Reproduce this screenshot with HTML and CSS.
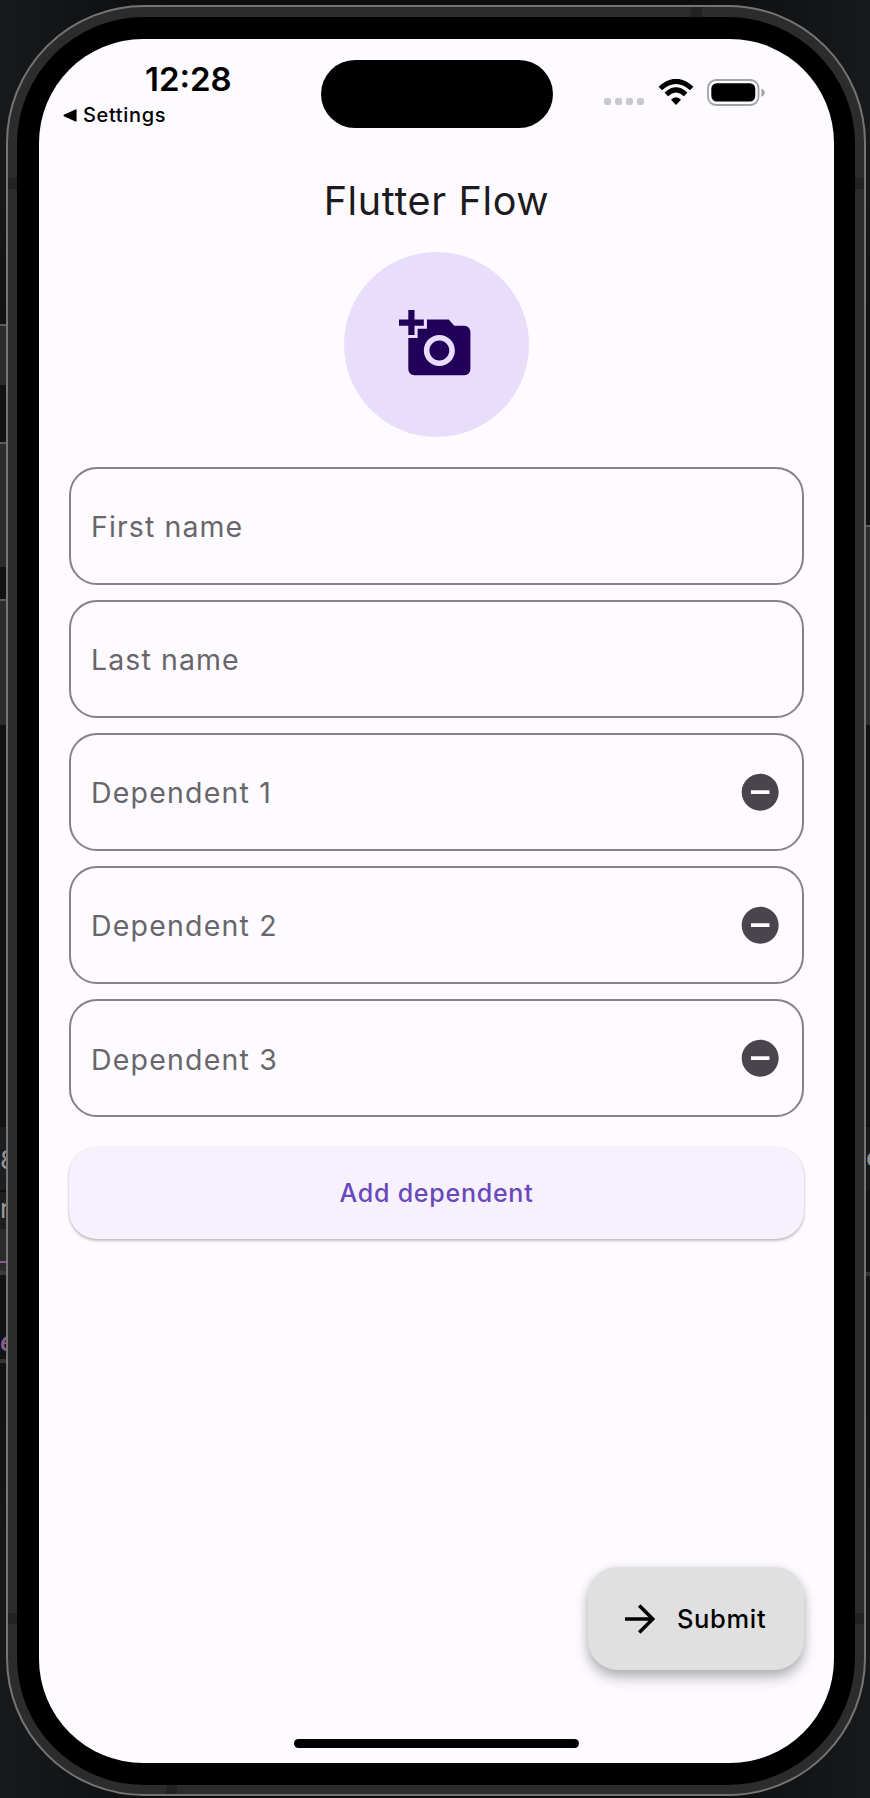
FILE: index.html
```html
<!DOCTYPE html>
<html lang="en">
<head>
<meta charset="utf-8">
<title>Flutter Flow</title>
<link rel="stylesheet" href="styles.css">
</head>
<body>
<div class="desktop">
  <div class="strip strip-left">
    <div class="panel p1"></div>
    <div class="panel p2"></div>
    <div class="panel p3"></div>
    <div class="row r1"><span>8</span></div>
    <div class="row r2"><span>r</span></div>
    <div class="tab"></div>
    <div class="row r3"><span>e</span></div>
  </div>
  <div class="device">
    <i class="band band-lt"></i><i class="band band-lb"></i>
    <i class="band band-rt"></i><i class="band band-rb"></i>
    <i class="band band-top"></i><i class="band band-bottom"></i>
    <div class="bezel">
      <main class="screen">
        <header class="status">
          <div class="status-left">
            <div class="time">12:28</div>
            <div class="back">
              <svg width="14" height="13" viewBox="0 0 13 12"><path d="M12.600 1v10q0 1-1 .6L.8 6.700Q0 6 .8 5.300L11.600.4q1-.4 1 .6z"/></svg>
              <span class="back-label">Settings</span>
            </div>
          </div>
          <div class="island"></div>
          <div class="status-right">
            <div class="dots"><i></i><i></i><i></i><i></i></div>
            <svg class="wifi" width="36" height="27" viewBox="0 0 36 27">
              <path d="M18 26l5-5.200Q21 18.300 18 18.300T13 20.800z"/>
              <path d="M8.300 15.300Q18 6.500 27.700 15.300M2.300 9.500Q18-4.800 33.700 9.500" fill="none" stroke="#000" stroke-width="5"/>
            </svg>
            <svg class="battery" width="59" height="28" viewBox="0 0 59 28">
              <rect x="1" y="1" width="50.500" height="25" rx="8" fill="none" stroke="#a3a3a5" stroke-width="1.800"/>
              <rect x="4.300" y="4.200" width="44" height="18.400" rx="5.500"/>
              <path d="M54.500 9.500q3.300 1.400 3.300 4.200t-3.300 4.200z" fill="#a3a3a5"/>
            </svg>
          </div>
        </header>
        <h1 class="title">Flutter Flow</h1>
        <div class="avatar">
          <svg width="74.500" height="74.500" viewBox="0 0 24 24"><path d="M3 4V1h2v3h3v2H5v3H3V6H0V4h3zm3 6V7h3V4h7l1.830 2H21c1.100 0 2 .9 2 2v12c0 1.100-.9 2-2 2H5c-1.100 0-2-.9-2-2V10h3zm7 9c2.760 0 5-2.240 5-5s-2.240-5-5-5-5 2.240-5 5 2.240 5 5 5zm-3.200-5c0 1.770 1.430 3.200 3.200 3.200s3.200-1.430 3.200-3.200-1.430-3.200-3.200-3.200-3.200 1.430-3.200 3.200z"/></svg>
        </div>
        <div class="fields">
          <div class="field name"><span>First name</span></div>
          <div class="field name"><span>Last name</span></div>
          <div class="field"><span>Dependent 1</span><svg class="remove" viewBox="0 0 24 24"><path d="M12 2C6.480 2 2 6.480 2 12s4.480 10 10 10 10-4.480 10-10S17.520 2 12 2zm5 11H7v-2h10v2z"/></svg></div>
          <div class="field"><span>Dependent 2</span><svg class="remove" viewBox="0 0 24 24"><path d="M12 2C6.480 2 2 6.480 2 12s4.480 10 10 10 10-4.480 10-10S17.520 2 12 2zm5 11H7v-2h10v2z"/></svg></div>
          <div class="field"><span>Dependent 3</span><svg class="remove" viewBox="0 0 24 24"><path d="M12 2C6.480 2 2 6.480 2 12s4.480 10 10 10 10-4.480 10-10S17.520 2 12 2zm5 11H7v-2h10v2z"/></svg></div>
        </div>
        <div class="add"><span>Add dependent</span></div>
        <div class="submit">
          <svg width="30" height="30" viewBox="0 0 30 30"><path d="M0 15H27.500M14.200 1.400L27.800 15 14.200 28.600" fill="none" stroke="#000" stroke-width="3.600"/></svg>
          <span>Submit</span>
        </div>
        <div class="home"></div>
      </main>
    </div>
  </div>
  <div class="strip strip-right">
    <div class="panel q1"></div>
    <div class="row q2"><span>e</span></div>
    <div class="line"></div>
  </div>
</div>
</body>
</html>
```
FILE: styles.css
```css
* { box-sizing: border-box; }
body { margin: 0; background: #111214; font-family: Inter, "Liberation Sans", sans-serif; }
.desktop {
  display: grid;
  grid-template-columns: 6px 860px 4px;
  width: 870px;
  height: 1798px;
  overflow: hidden;
  background: linear-gradient(90deg, #18191b 0, #0c0d0e 170px, #0c0d0e 700px, #18191b 870px);
}
.strip {
  display: flex;
  flex-direction: column;
  overflow: hidden;
  background: linear-gradient(rgba(16, 17, 19, 0) 180px, #111214 320px, #111214 1400px, rgba(16, 17, 19, 0) 1600px);
}
.panel { flex: none; background: #2c2c2c; border-top: 2px solid #5a5a5a; }
.p1 { margin-top: 324px; height: 61px; }
.p2 { margin-top: 57px; height: 125px; }
.p3 { margin-top: 32px; height: 126px; }
.row { flex: none; overflow: hidden; font-size: 26px; line-height: 30px; color: #999; }
.r1 { margin-top: 400px; height: 65px; padding-top: 18px; background: #1c1e1f; border-top: 2px solid #0e0f10; }
.r2 { height: 39px; background: #1c1e1f; border-top: 2px solid #0e0f10; line-height: 34px; }
.r3 { margin-top: 52px; height: 36px; color: #8d5a8d; font-style: italic; font-weight: 600; border-bottom: 4px solid #333; }
.tab {
  flex: none;
  height: 46px;
  background: linear-gradient(#292c2a 32px, #8d5a8d 32px, #8d5a8d 34px, #292c2a 34px, #292c2a 42px, #3a3c3b 42px);
}
.q1 { margin-top: 525px; height: 200px; }
.q2 { margin-top: 400px; height: 65px; padding-top: 16px; background: #18191a; border-top: 2px solid #0e0f10; }
.line { flex: none; margin-top: 82px; height: 4px; background: #333; }

.device {
  position: relative;
  width: 860px;
  height: 1791px;
  margin-top: 5px;
  padding: 10px 9px 9px;
  border: 2px solid #757575;
  border-radius: 138px;
  background: #2c2c2c;
}
.band { position: absolute; background: #222; }
.band-lt, .band-rt { top: 171px; width: 9px; height: 11px; }
.band-lb, .band-rb { top: 1606px; width: 9px; height: 11px; }
.band-lt, .band-lb { left: 0; }
.band-rt, .band-rb { right: 0; }
.band-top { top: 0; left: 683px; width: 11px; height: 10px; }
.band-bottom { bottom: 0; left: 158px; width: 11px; height: 9px; }
.bezel { height: 1768px; padding: 22px 21px 22px 22px; border-radius: 127px; background: #000; }
.screen {
  display: flex;
  flex-direction: column;
  height: 1724px;
  padding: 21px 30px 0;
  border-radius: 104px;
  background: #fdfbff;
}

.status { display: flex; height: 68px; }
.status-left { flex: none; width: 251.500px; margin: 0 30px 0 -30px; padding-left: 23.500px; }
.time { height: 45px; padding-left: 82.500px; font-size: 33px; line-height: 38px; font-weight: 600; letter-spacing: 0; }
.back { display: flex; align-items: center; gap: 6.500px; height: 20px; }
.back svg { flex: none; }
.back-label { font-size: 20px; line-height: 20px; font-weight: 480; letter-spacing: 0.650px; white-space: nowrap; }
.island { flex: none; width: 232px; height: 68px; border-radius: 34px; background: #000; }
.status-right { display: flex; height: 28px; margin: 19px 0 0 51px; }
.dots { display: flex; gap: 4.200px; width: 54px; padding-top: 19px; }
.dots i { flex: none; width: 7px; height: 7px; border-radius: 2.200px; background: #c9c8cb; }
.wifi { flex: none; }
.battery { flex: none; margin-left: 13.500px; }

.title {
  margin: 43px 0 0;
  height: 60px;
  text-align: center;
  font-size: 39.500px;
  line-height: 60px;
  font-weight: 380;
  letter-spacing: 0.650px;
  color: #1d1b1f;
}
.avatar {
  display: flex;
  align-items: center;
  justify-content: center;
  width: 185px;
  height: 185px;
  margin: 20.500px auto 0;
  border-radius: 50%;
  background: #e8defc;
}
.avatar svg { fill: #22005a; }
.fields { display: flex; flex-direction: column; gap: 15px; margin-top: 30.100px; }
.field {
  display: flex;
  align-items: center;
  justify-content: space-between;
  height: 118.100px;
  padding: 2px 20px 0 20px;
  border: 2px solid #85818a;
  border-radius: 28px;
  font-size: 28.500px;
  font-weight: 440;
  letter-spacing: 1.200px;
  color: #68666a;
}
.name { letter-spacing: 1.100px; }
.remove { width: 44.400px; height: 44.400px; margin-top: -2px; fill: #48454c; }
.add {
  display: flex;
  align-items: center;
  justify-content: center;
  height: 92.500px;
  margin-top: 29.900px;
  border-radius: 28px;
  background: #f6f1fc;
  box-shadow: 0 2px 3px rgba(0, 0, 0, 0.24), 0 0 2px rgba(0, 0, 0, 0.1);
  color: #6948bb;
  font-size: 25px;
  font-weight: 480;
  letter-spacing: 0.750px;
}
.submit {
  display: flex;
  align-items: center;
  align-self: flex-end;
  gap: 22.500px;
  width: 216.500px;
  height: 103.500px;
  margin-top: 327.500px;
  padding-left: 37px;
  border-radius: 30px;
  background: #e0e0e0;
  box-shadow: 0 8px 13px rgba(0, 0, 0, 0.26), 0 1px 10px rgba(0, 0, 0, 0.1);
  font-size: 25.500px;
  font-weight: 460;
  letter-spacing: 0.650px;
}
.home { width: 285px; height: 9px; margin: 68.500px auto 0; border-radius: 5px; background: #000; }
```
